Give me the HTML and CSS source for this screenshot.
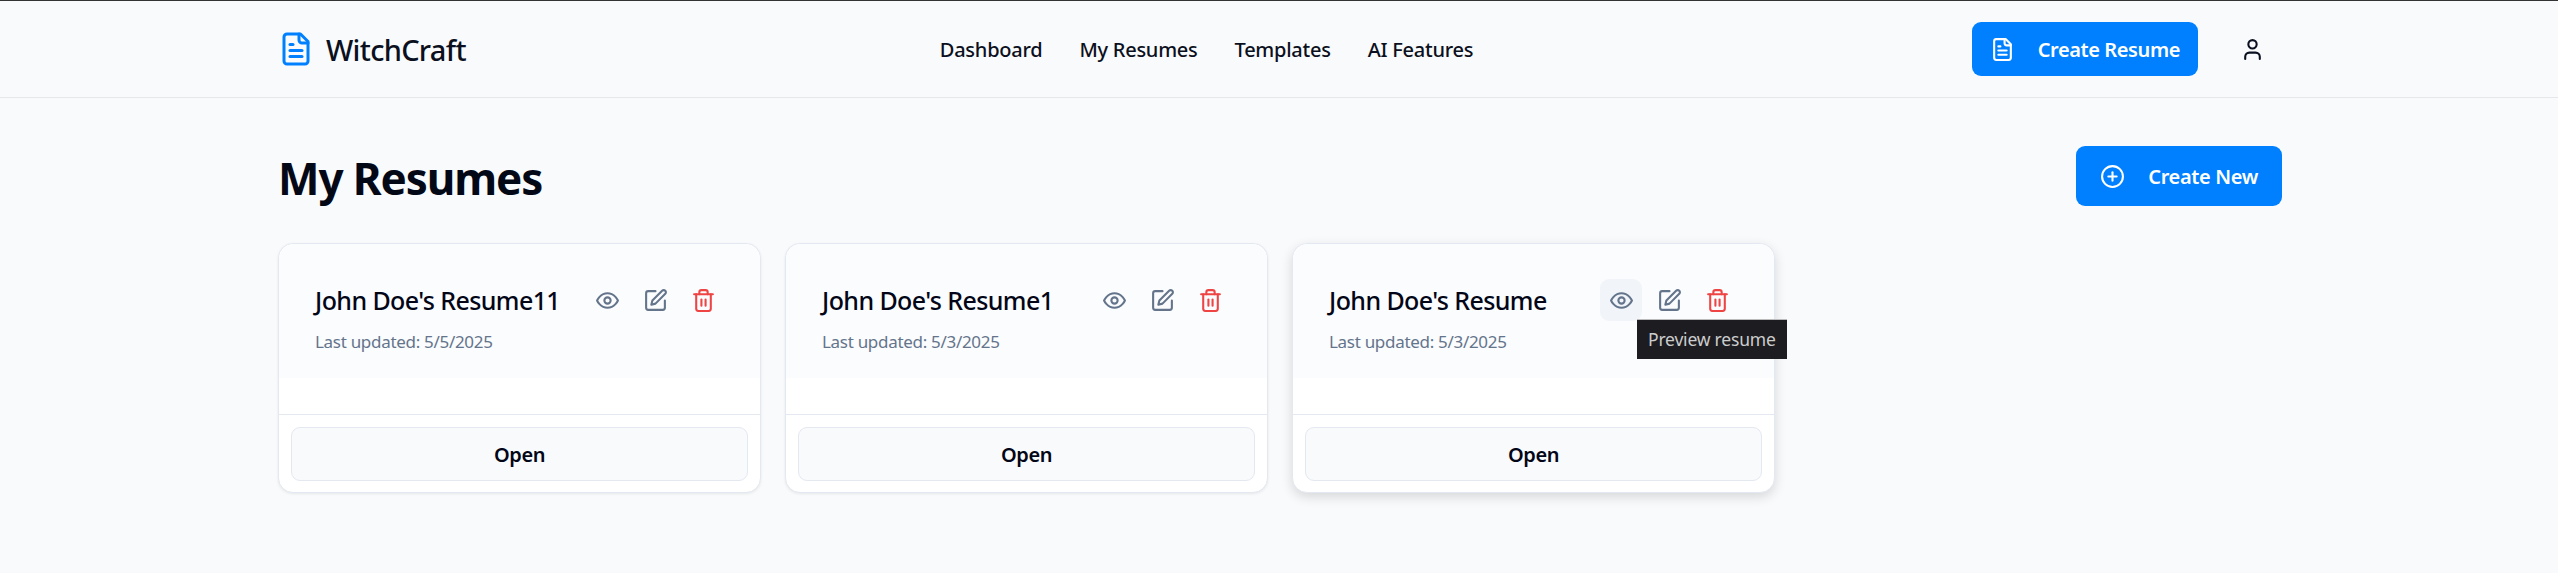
FILE: index.html
```html
<!DOCTYPE html>
<html lang="en">
<head>
  <meta charset="UTF-8">
  <title>WitchCraft - My Resumes</title>
  <link rel="stylesheet" href="styles.css">
</head>
<body>
  <header class="topbar">
    <a class="brand" href="#">
      <svg class="brand-icon" viewBox="0 0 24 24"><path d="M15 2H6a2 2 0 0 0-2 2v16a2 2 0 0 0 2 2h12a2 2 0 0 0 2-2V7Z"/><path d="M14 2v4a2 2 0 0 0 2 2h4"/><path d="M10 9H8"/><path d="M16 13H8"/><path d="M16 17H8"/></svg>
      <span>WitchCraft</span>
    </a>
    <nav class="nav">
      <a href="#">Dashboard</a>
      <a href="#">My Resumes</a>
      <a href="#">Templates</a>
      <a href="#">AI Features</a>
    </nav>
    <div class="actions">
      <button class="primary primary-small" type="button">
        <svg class="icon" viewBox="0 0 24 24"><path d="M15 2H6a2 2 0 0 0-2 2v16a2 2 0 0 0 2 2h12a2 2 0 0 0 2-2V7Z"/><path d="M14 2v4a2 2 0 0 0 2 2h4"/><path d="M10 9H8"/><path d="M16 13H8"/><path d="M16 17H8"/></svg>
        Create Resume
      </button>
      <button class="user-btn" type="button">
        <svg class="icon" viewBox="0 0 24 24"><path d="M19 21v-2a4 4 0 0 0-4-4H9a4 4 0 0 0-4 4v2"/><circle cx="12" cy="7" r="4"/></svg>
      </button>
    </div>
  </header>

  <main class="page">
    <div class="page-head">
      <h1>My Resumes</h1>
      <button class="primary" type="button">
        <svg class="icon" viewBox="0 0 24 24"><circle cx="12" cy="12" r="10"/><path d="M8 12h8"/><path d="M12 8v8"/></svg>
        Create New
      </button>
    </div>

    <div class="grid">
      <article class="card">
        <div class="card-head">
          <div class="card-row">
            <h3>John Doe's Resume11</h3>
            <div class="tools">
              <button class="tool" type="button"><svg class="icon" viewBox="0 0 24 24"><path d="M2 12s3-7 10-7 10 7 10 7-3 7-10 7-10-7-10-7Z"/><circle cx="12" cy="12" r="3"/></svg></button>
              <button class="tool" type="button"><svg class="icon" viewBox="0 0 24 24"><path d="M12 3H5a2 2 0 0 0-2 2v14a2 2 0 0 0 2 2h14a2 2 0 0 0 2-2v-7"/><path d="M18.375 2.625a2.121 2.121 0 1 1 3 3L12 15l-4 1 1-4Z"/></svg></button>
              <button class="tool danger" type="button"><svg class="icon" viewBox="0 0 24 24"><path d="M3 6h18"/><path d="M19 6v14c0 1-1 2-2 2H7c-1 0-2-1-2-2V6"/><path d="M8 6V4c0-1 1-2 2-2h4c1 0 2 1 2 2v2"/><path d="M10 11v6"/><path d="M14 11v6"/></svg></button>
            </div>
          </div>
          <p class="updated">Last updated: 5/5/2025</p>
        </div>
        <div class="card-body"></div>
        <div class="card-foot"><button class="open" type="button">Open</button></div>
      </article>

      <article class="card">
        <div class="card-head">
          <div class="card-row">
            <h3>John Doe's Resume1</h3>
            <div class="tools">
              <button class="tool" type="button"><svg class="icon" viewBox="0 0 24 24"><path d="M2 12s3-7 10-7 10 7 10 7-3 7-10 7-10-7-10-7Z"/><circle cx="12" cy="12" r="3"/></svg></button>
              <button class="tool" type="button"><svg class="icon" viewBox="0 0 24 24"><path d="M12 3H5a2 2 0 0 0-2 2v14a2 2 0 0 0 2 2h14a2 2 0 0 0 2-2v-7"/><path d="M18.375 2.625a2.121 2.121 0 1 1 3 3L12 15l-4 1 1-4Z"/></svg></button>
              <button class="tool danger" type="button"><svg class="icon" viewBox="0 0 24 24"><path d="M3 6h18"/><path d="M19 6v14c0 1-1 2-2 2H7c-1 0-2-1-2-2V6"/><path d="M8 6V4c0-1 1-2 2-2h4c1 0 2 1 2 2v2"/><path d="M10 11v6"/><path d="M14 11v6"/></svg></button>
            </div>
          </div>
          <p class="updated">Last updated: 5/3/2025</p>
        </div>
        <div class="card-body"></div>
        <div class="card-foot"><button class="open" type="button">Open</button></div>
      </article>

      <article class="card card-hover">
        <div class="card-head">
          <div class="card-row">
            <h3>John Doe's Resume</h3>
            <div class="tools">
              <button class="tool tool-hover" type="button">
                <svg class="icon" viewBox="0 0 24 24"><path d="M2 12s3-7 10-7 10 7 10 7-3 7-10 7-10-7-10-7Z"/><circle cx="12" cy="12" r="3"/></svg>
                <span class="tooltip">Preview resume</span>
              </button>
              <button class="tool" type="button"><svg class="icon" viewBox="0 0 24 24"><path d="M12 3H5a2 2 0 0 0-2 2v14a2 2 0 0 0 2 2h14a2 2 0 0 0 2-2v-7"/><path d="M18.375 2.625a2.121 2.121 0 1 1 3 3L12 15l-4 1 1-4Z"/></svg></button>
              <button class="tool danger" type="button"><svg class="icon" viewBox="0 0 24 24"><path d="M3 6h18"/><path d="M19 6v14c0 1-1 2-2 2H7c-1 0-2-1-2-2V6"/><path d="M8 6V4c0-1 1-2 2-2h4c1 0 2 1 2 2v2"/><path d="M10 11v6"/><path d="M14 11v6"/></svg></button>
            </div>
          </div>
          <p class="updated">Last updated: 5/3/2025</p>
        </div>
        <div class="card-body"></div>
        <div class="card-foot"><button class="open" type="button">Open</button></div>
      </article>
    </div>
  </main>
</body>
</html>
```

FILE: styles.css
```css
* {
  box-sizing: border-box;
}

html, body {
  height: 100%;
}

body {
  margin: 0;
  overflow: hidden;
  font-family: "Noto Sans", "Open Sans", sans-serif;
  background-color: #f9fafc;
  color: #0b1020;
  border-top: 1px solid #333;
}

a {
  color: inherit;
  text-decoration: none;
}

button {
  font-family: inherit;
  cursor: pointer;
}

svg {
  fill: none;
  stroke: currentColor;
  stroke-linecap: round;
  stroke-linejoin: round;
  stroke-width: 2;
}

.icon {
  width: 25px;
  height: 25px;
  flex: none;
}

.topbar {
  display: flex;
  align-items: center;
  height: 97px;
  padding: 0 293px 0 278px;
  border-bottom: 1px solid #e5e7eb;
}

.brand {
  display: flex;
  align-items: center;
  gap: 12px;
  font-size: 29px;
  font-weight: 500;
  letter-spacing: -0.7px;
}

.brand-icon {
  width: 36px;
  height: 36px;
  color: #0080ff;
}

.nav {
  display: flex;
  gap: 37px;
  margin-left: 474px;
  padding-top: 1px;
  font-size: 20px;
  font-weight: 500;
  letter-spacing: -0.25px;
}

.actions {
  display: flex;
  align-items: center;
  gap: 42px;
  margin-left: auto;
}

.primary {
  display: flex;
  align-items: center;
  gap: 23px;
  height: 60px;
  padding: 0 24px;
  border: none;
  border-radius: 9px;
  background-color: #0080ff;
  color: #fff;
  font-size: 20px;
  font-weight: 600;
  letter-spacing: -0.35px;
}

.primary-small {
  height: 54px;
  padding: 0 18px;
  letter-spacing: -0.4px;
}

.user-btn {
  display: flex;
  padding: 0;
  border: none;
  background: none;
  color: #0b1020;
}

.page {
  padding: 48px 276px 0 278px;
}

.page-head {
  display: flex;
  align-items: center;
  justify-content: space-between;
  margin-bottom: 37px;
}

h1 {
  margin: 4px 0 0;
  font-size: 44px;
  line-height: 52px;
  font-weight: 700;
  letter-spacing: -1.1px;
  color: #030817;
}

.grid {
  display: grid;
  grid-template-columns: repeat(4, 1fr);
  gap: 24px;
}

.card {
  height: 250px;
  border: 1px solid #e4e8f0;
  border-radius: 15px;
  background-color: #fff;
  box-shadow: 0 1px 3px rgba(0, 0, 0, 0.08);
}

.card-hover {
  box-shadow: 0 4px 12px rgba(0, 0, 0, 0.14);
}

.card-head {
  height: 134px;
  padding: 35px 36px 0;
  border-radius: 15px 15px 0 0;
  background-color: #fbfcfe;
}

.card-row {
  display: flex;
  align-items: center;
  justify-content: space-between;
}

h3 {
  margin: 0;
  font-size: 25px;
  font-weight: 500;
  letter-spacing: -0.6px;
  color: #020617;
}

.tools {
  display: flex;
  gap: 6px;
}

.tool {
  position: relative;
  display: flex;
  align-items: center;
  justify-content: center;
  width: 42px;
  height: 42px;
  padding: 0;
  border: none;
  border-radius: 9px;
  background: none;
  color: #64748b;
}

.tool.danger {
  color: #ef4444;
}

.tool-hover {
  background-color: #f1f5f9;
}

.tooltip {
  position: absolute;
  top: 40px;
  left: 37px;
  padding: 7px 11px 8px;
  border-top: 1px solid #bbb;
  background-color: #1c1c21;
  color: #ccc;
  font-size: 17.5px;
  letter-spacing: -0.2px;
  white-space: nowrap;
}

.updated {
  margin: 9px 0 0;
  font-size: 17px;
  letter-spacing: -0.3px;
  color: #64748b;
}

.card-body {
  height: 37px;
  border-bottom: 1px solid #e4e8f0;
}

.card-foot {
  height: 78px;
  padding: 12px;
  border-radius: 0 0 15px 15px;
}

.open {
  width: 100%;
  height: 54px;
  border: 1px solid #e4e8f0;
  border-radius: 9px;
  background-color: #f9fafc;
  color: #020617;
  font-size: 20px;
  font-weight: 600;
  letter-spacing: -0.4px;
}
```
